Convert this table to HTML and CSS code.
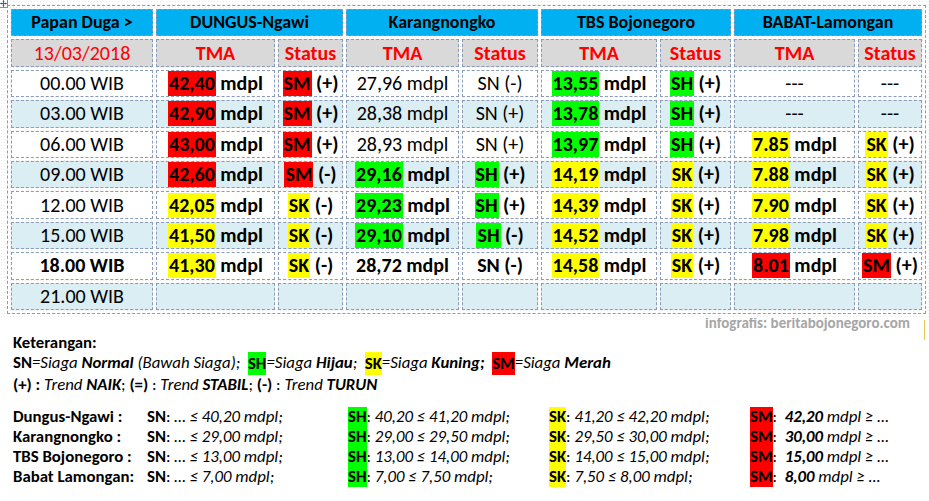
FILE: index.html
```html
<!DOCTYPE html>
<html lang="id">
<head>
<meta charset="utf-8">
<title>Papan Duga</title>
<link rel="stylesheet" href="styles.css">
</head>
<body>
<div class="sheet">
  <svg class="move-handle" width="9" height="9" viewBox="0 0 9 9" aria-hidden="true">
    <rect x="0.5" y="0.5" width="8" height="8" fill="#fff" stroke="#7f8fa8"/>
    <path d="M4.5 1.5v6M1.5 4.5h6" stroke="#3a5b96" stroke-width="1"/>
    <path d="M4.5 1.2l-1.3 1.3h2.6zM4.5 7.8l-1.3-1.3h2.6zM1.2 4.5l1.3-1.3v2.6zM7.8 4.5l-1.3-1.3v2.6z" fill="#3a5b96"/>
  </svg>
  <table class="board">
    <colgroup>
      <col class="c0"><col class="c1"><col class="c2"><col class="c3"><col class="c4"><col class="c5"><col class="c6"><col class="c7"><col class="c8">
    </colgroup>
    <tr class="head">
      <td class="hd">Papan Duga &gt;</td>
      <td class="hd" colspan="2">DUNGUS-Ngawi</td>
      <td class="hd" colspan="2">Karangnongko</td>
      <td class="hd" colspan="2">TBS Bojonegoro</td>
      <td class="hd" colspan="2">BABAT-Lamongan</td>
    </tr>
    <tr class="subhead">
      <td class="sub date">13/03/2018</td>
      <td class="sub">TMA</td><td class="sub">Status</td>
      <td class="sub">TMA</td><td class="sub">Status</td>
      <td class="sub">TMA</td><td class="sub">Status</td>
      <td class="sub">TMA</td><td class="sub">Status</td>
    </tr>
    <tr>
      <td>00.00 WIB</td>
      <td class="b"><span class="hl r">42,40</span> mdpl</td>
      <td class="b"><span class="hl r">SM</span> (+)</td>
      <td>27,96 mdpl</td>
      <td>SN (-)</td>
      <td class="b"><span class="hl g">13,55</span> mdpl</td>
      <td class="b"><span class="hl g">SH</span> (+)</td>
      <td>---</td>
      <td>---</td>
    </tr>
    <tr class="alt">
      <td>03.00 WIB</td>
      <td class="b"><span class="hl r">42,90</span> mdpl</td>
      <td class="b"><span class="hl r">SM</span> (+)</td>
      <td>28,38 mdpl</td>
      <td>SN (+)</td>
      <td class="b"><span class="hl g">13,78</span> mdpl</td>
      <td class="b"><span class="hl g">SH</span> (+)</td>
      <td>---</td>
      <td>---</td>
    </tr>
    <tr>
      <td>06.00 WIB</td>
      <td class="b"><span class="hl r">43,00</span> mdpl</td>
      <td class="b"><span class="hl r">SM</span> (+)</td>
      <td>28,93 mdpl</td>
      <td>SN (+)</td>
      <td class="b"><span class="hl g">13,97</span> mdpl</td>
      <td class="b"><span class="hl g">SH</span> (+)</td>
      <td class="b"><span class="hl y">7.85</span> mdpl</td>
      <td class="b"><span class="hl y">SK</span> (+)</td>
    </tr>
    <tr class="alt">
      <td>09.00 WIB</td>
      <td class="b"><span class="hl r">42,60</span> mdpl</td>
      <td class="b"><span class="hl r">SM</span> (-)</td>
      <td class="b"><span class="hl g">29,16</span> mdpl</td>
      <td class="b"><span class="hl g">SH</span> (+)</td>
      <td class="b"><span class="hl y">14,19</span> mdpl</td>
      <td class="b"><span class="hl y">SK</span> (+)</td>
      <td class="b"><span class="hl y">7.88</span> mdpl</td>
      <td class="b"><span class="hl y">SK</span> (+)</td>
    </tr>
    <tr>
      <td>12.00 WIB</td>
      <td class="b"><span class="hl y">42,05</span> mdpl</td>
      <td class="b"><span class="hl y">SK</span> (-)</td>
      <td class="b"><span class="hl g">29,23</span> mdpl</td>
      <td class="b"><span class="hl g">SH</span> (+)</td>
      <td class="b"><span class="hl y">14,39</span> mdpl</td>
      <td class="b"><span class="hl y">SK</span> (+)</td>
      <td class="b"><span class="hl y">7.90</span> mdpl</td>
      <td class="b"><span class="hl y">SK</span> (+)</td>
    </tr>
    <tr class="alt">
      <td>15.00 WIB</td>
      <td class="b"><span class="hl y">41,50</span> mdpl</td>
      <td class="b"><span class="hl y">SK</span> (-)</td>
      <td class="b"><span class="hl g">29,10</span> mdpl</td>
      <td class="b"><span class="hl g">SH</span> (-)</td>
      <td class="b"><span class="hl y">14,52</span> mdpl</td>
      <td class="b"><span class="hl y">SK</span> (+)</td>
      <td class="b"><span class="hl y">7.98</span> mdpl</td>
      <td class="b"><span class="hl y">SK</span> (+)</td>
    </tr>
    <tr>
      <td class="b">18.00 WIB</td>
      <td class="b"><span class="hl y">41,30</span> mdpl</td>
      <td class="b"><span class="hl y">SK</span> (-)</td>
      <td class="b">28,72 mdpl</td>
      <td class="b">SN (-)</td>
      <td class="b"><span class="hl y">14,58</span> mdpl</td>
      <td class="b"><span class="hl y">SK</span> (+)</td>
      <td class="b"><span class="hl r">8.01</span> mdpl</td>
      <td class="b"><span class="hl r">SM</span> (+)</td>
    </tr>
    <tr class="alt">
      <td>21.00 WIB</td>
      <td></td><td></td><td></td><td></td><td></td><td></td><td></td><td></td>
    </tr>
  </table>
  <span class="row-mark" aria-hidden="true"></span>
</div>
<div class="credit">infografis: beritabojonegoro.com</div>
<div class="legend">
  <div class="title">Keterangan:</div>
  <div class="line"><b>SN</b><i>=Siaga <b>Normal</b> (Bawah Siaga);</i>&nbsp; <b class="hl2 g">SH</b><i>=Siaga <b>Hijau</b>;</i>&nbsp; <b class="hl2 y">SK</b><i>=Siaga <b>Kuning;</b></i>&nbsp; <b class="hl2 r">SM</b><i>=Siaga <b>Merah</b></i></div>
  <div class="line"><b>(+) :</b> <i>Trend <b>NAIK</b></i>; <b>(=)</b> : <i>Trend <b>STABIL</b></i>; <b>(-)</b> : <i>Trend <b>TURUN</b></i></div>
  <div class="ranges">
    <b>Dungus-Ngawi :</b>
    <span><b>SN</b>: <i>… ≤ 40,20 mdpl;</i></span>
    <span><b class="hl3 g">SH</b>: <i>40,20 ≤ 41,20 mdpl;</i></span>
    <span><b class="hl3 y">SK</b>: <i>41,20 ≤ 42,20 mdpl;</i></span>
    <span><b class="hl3 r">SM</b>:&nbsp; <i><b>42,20</b> mdpl ≥ …</i></span>

    <b>Karangnongko :</b>
    <span><b>SN</b>: <i>… ≤ 29,00 mdpl;</i></span>
    <span><b class="hl3 g">SH</b>: <i>29,00 ≤ 29,50 mdpl;</i></span>
    <span><b class="hl3 y">SK</b>: <i>29,50 ≤ 30,00 mdpl;</i></span>
    <span><b class="hl3 r">SM</b>:&nbsp; <i><b>30,00</b> mdpl ≥ …</i></span>

    <b>TBS Bojonegoro :</b>
    <span><b>SN</b>: <i>… ≤ 13,00 mdpl;</i></span>
    <span><b class="hl3 g">SH</b>: <i>13,00 ≤ 14,00 mdpl;</i></span>
    <span><b class="hl3 y">SK</b>: <i>14,00 ≤ 15,00 mdpl;</i></span>
    <span><b class="hl3 r">SM</b>:&nbsp; <i><b>15,00</b> mdpl ≥ …</i></span>

    <b>Babat Lamongan:</b>
    <span><b>SN</b>: <i>… ≤ 7,00 mdpl;</i></span>
    <span><b class="hl3 g">SH</b>: <i>7,00 ≤ 7,50 mdpl;</i></span>
    <span><b class="hl3 y">SK</b>: <i>7,50 ≤ 8,00 mdpl;</i></span>
    <span><b class="hl3 r">SM</b>:&nbsp; <i><b>8,00</b> mdpl ≥ …</i></span>
  </div>
</div>
</body>
</html>
```
FILE: styles.css
```css
body {
  margin: 0;
  background: #ffffff;
  color: #000000;
  font-family: "Carlito", "Lato", "Liberation Sans", sans-serif;
}

.sheet {
  position: relative;
  padding: 5px 0 4px 7px;
  background-color: #ffffff;
  background-image: radial-gradient(circle, #ececec 0.7px, transparent 0.8px);
  background-size: 3px 3px;
}

.move-handle {
  position: absolute;
  left: -1px;
  top: -1px;
}

.row-mark {
  position: absolute;
  right: 2px;
  bottom: -22px;
  width: 2px;
  height: 20px;
  border-left: 1px solid #e8c45a;
}

.board {
  border-collapse: separate;
  border-spacing: 3px;
  border: 1px dashed #8a9bb8;
  table-layout: fixed;
  width: 919px;
}

.c0 { width: 142px; }
.c1 { width: 119px; }
.c2 { width: 65px; }
.c3 { width: 113px; }
.c4 { width: 76px; }
.c5 { width: 116px; }
.c6 { width: 71px; }
.c7 { width: 121px; }
.c8 { width: 64px; }

.board tr {
  height: 27.4px;
}

.board td {
  border: 1px dashed #8a9bb8;
  padding: 0;
  text-align: center;
  vertical-align: middle;
  font-size: 20px;
  line-height: 25px;
  white-space: nowrap;
  background: #ffffff;
}

.board tr.alt td {
  background: #daeef3;
}

.board td.hd {
  background: #00b0f0;
  font-weight: bold;
  font-size: 18px;
}

.board td.sub {
  background: #d9d9d9;
  color: #ff0000;
  font-weight: bold;
}

.board td.sub.date {
  font-weight: normal;
}

.board td.b {
  font-weight: bold;
}

.hl {
  display: inline-block;
  line-height: 25px;
  padding: 0 1px;
}

.r { background: #ff0000; }
.g { background: #00ff00; }
.y { background: #ffff00; }

.credit {
  text-align: right;
  padding-right: 19px;
  color: #a6a6a6;
  font-weight: bold;
  font-size: 15px;
  line-height: 18px;
  margin-top: -4px;
}

.legend {
  padding-left: 13px;
  font-size: 16.8px;
  line-height: 20px;
  margin-top: 1px;
}

.title {
  font-weight: bold;
}

.hl2 {
  display: inline-block;
  line-height: 23px;
  vertical-align: top;
  margin-top: -1px;
}

.ranges {
  display: grid;
  grid-template-columns: 134px 201px 201px 201px auto;
  line-height: 20px;
  margin-top: 12px;
}

.hl3 {
  display: inline-block;
  line-height: 20px;
  vertical-align: top;
}
```
